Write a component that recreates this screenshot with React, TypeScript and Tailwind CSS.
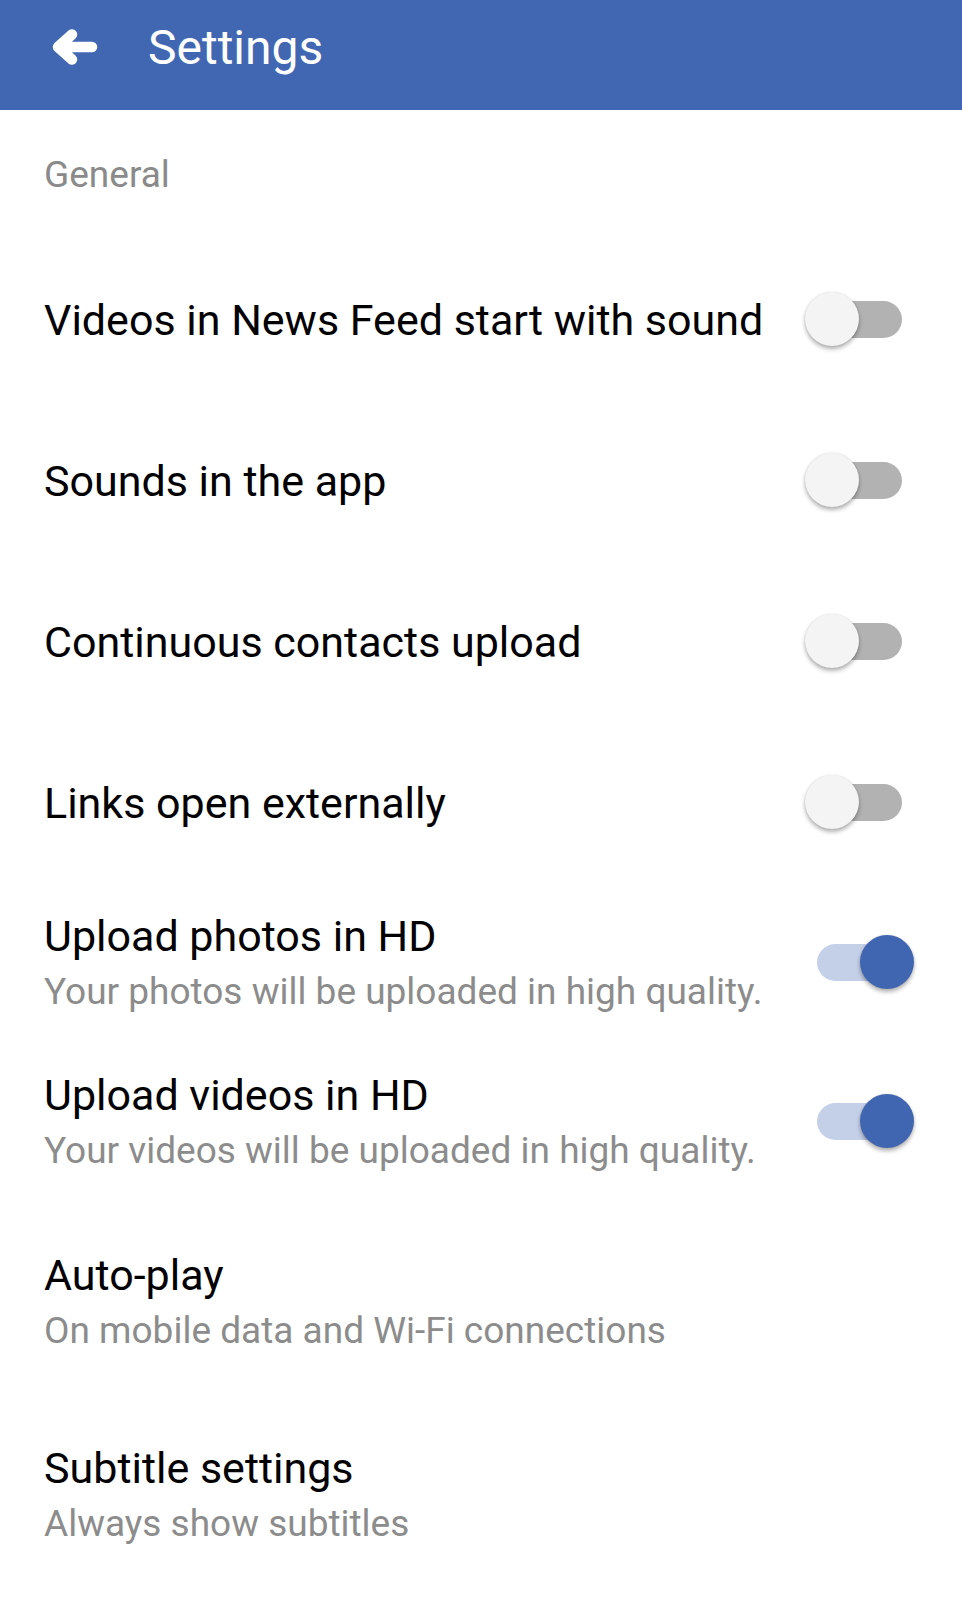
import React from "react";

const font = { fontFamily: "Roboto, 'Noto Sans', sans-serif" };

function Toggle({ on }: { on: boolean }) {
  return (
    <div className="relative w-[109px] h-[54px] shrink-0 mt-[-4px]">
      <div
        className={
          "absolute left-[12px] top-[9px] w-[85px] h-[37px] rounded-full " +
          (on ? "bg-[#c4cfe8]" : "bg-[#b2b2b2]")
        }
      />
      <div
        className={
          "absolute top-0 w-[54px] h-[54px] rounded-full shadow-[0_3px_4px_rgba(0,0,0,0.3),0_0_2px_rgba(0,0,0,0.12)] " +
          (on ? "left-[55px] bg-[#4166b1]" : "left-0 bg-[#f4f4f4]")
        }
      />
    </div>
  );
}

type Item = { title: string; sub?: string; toggle?: boolean; h: string };

function Row({ title, sub, toggle, h }: Item) {
  return (
    <div className={"flex items-center justify-between pl-[44px] pr-[48px] " + h}>
      <div className="flex flex-col">
        <div className="text-[43px] leading-[55px] text-[#000000] whitespace-nowrap">{title}</div>
        {sub && (
          <div className="text-[37px] leading-[55px] text-[#8c8c8c] whitespace-nowrap">{sub}</div>
        )}
      </div>
      {toggle !== undefined && <Toggle on={toggle} />}
    </div>
  );
}

export default function App() {
  return (
    <div className="w-[962px] h-[1600px] bg-white overflow-hidden" style={font}>
      <div className="h-[110px] bg-[#4267b2] flex items-center">
        <svg width="56" height="44" viewBox="0 0 56 44" className="ml-[48px] mt-[-16px]">
          <path
            d="M10 22 H44 M10 22 L24 9.5 M10 22 L24 34.5"
            stroke="#ffffff"
            strokeWidth="10.5"
            strokeLinecap="round"
            strokeLinejoin="round"
            fill="none"
          />
        </svg>
        <div className="ml-[44px] mt-[-14px] text-[48px] text-white leading-none">Settings</div>
      </div>
      <div className="h-[130px] flex items-center pl-[44px] text-[37px] text-[#8a8a8a]">General</div>
      <Row title="Videos in News Feed start with sound" toggle={false} h="h-[161px]" />
      <Row title="Sounds in the app" toggle={false} h="h-[161px]" />
      <Row title="Continuous contacts upload" toggle={false} h="h-[161px]" />
      <Row title="Links open externally" toggle={false} h="h-[161px]" />
      <Row
        title="Upload photos in HD"
        sub="Your photos will be uploaded in high quality."
        toggle={true}
        h="h-[159px]"
      />
      <Row
        title="Upload videos in HD"
        sub="Your videos will be uploaded in high quality."
        toggle={true}
        h="h-[160px]"
      />
      <Row title="Auto-play" sub="On mobile data and Wi-Fi connections" h="h-[200px]" />
      <Row title="Subtitle settings" sub="Always show subtitles" h="h-[186px]" />
    </div>
  );
}
